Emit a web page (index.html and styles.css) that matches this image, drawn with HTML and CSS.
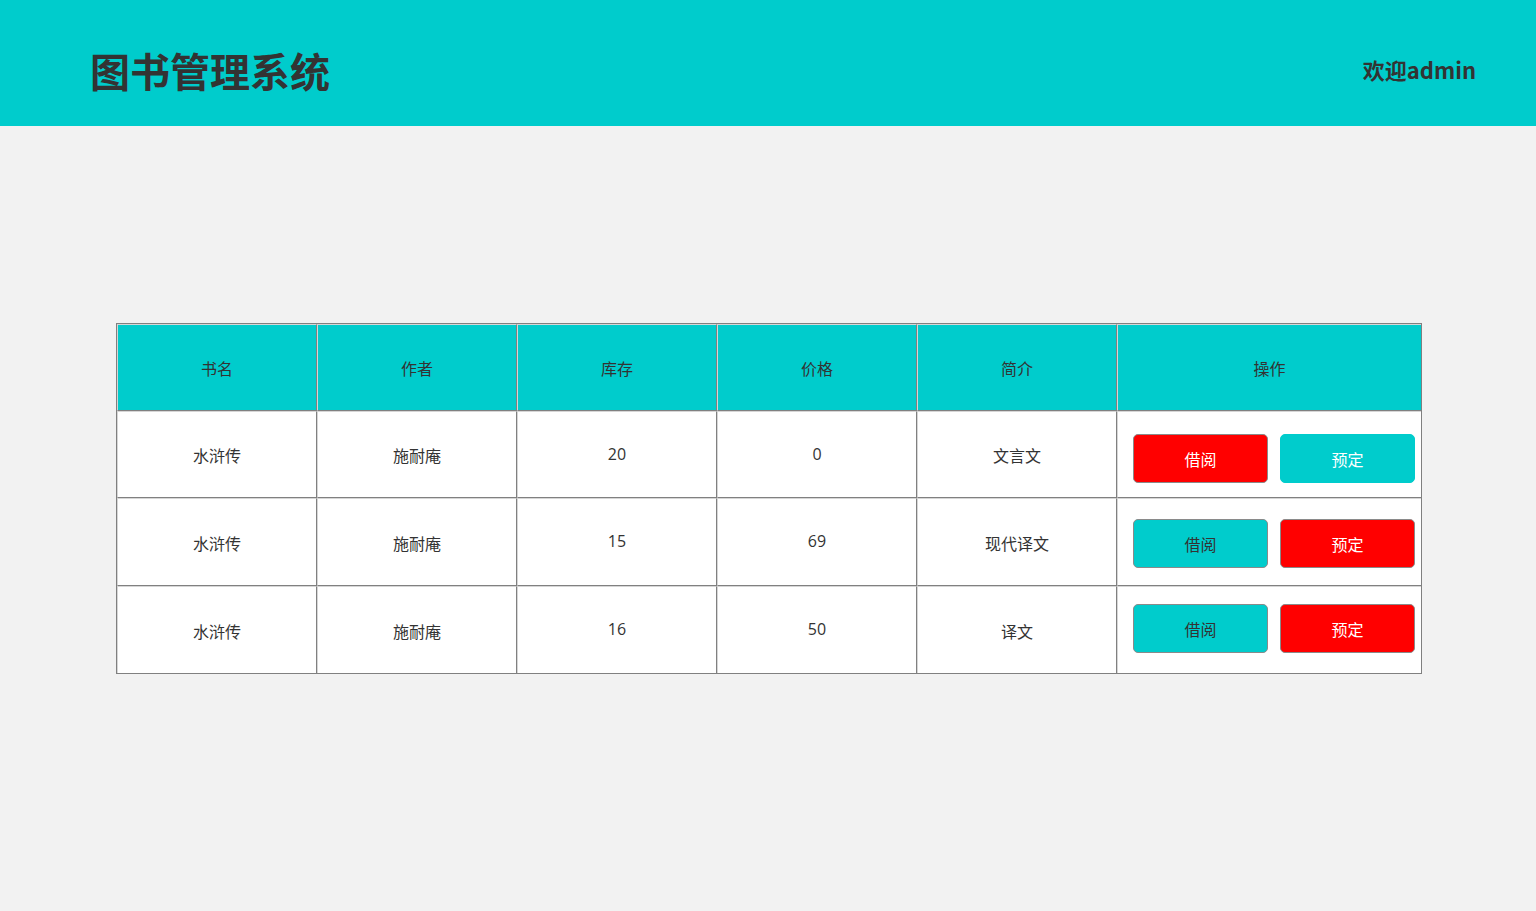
FILE: index.html
```html
<!DOCTYPE html>
<html lang="zh">
<head>
<meta charset="utf-8">
<title>图书管理系统</title>
<link rel="stylesheet" href="styles.css">
</head>
<body>
<header class="topbar">
  <h1 class="title">图书管理系统</h1>
  <div class="welcome">欢迎admin</div>
</header>
<main class="content">
  <table class="books">
    <thead>
      <tr><th>书名</th><th>作者</th><th>库存</th><th>价格</th><th>简介</th><th class="ops">操作</th></tr>
    </thead>
    <tbody>
      <tr><td>水浒传</td><td>施耐庵</td><td class="num">20</td><td class="num">0</td><td>文言文</td>
        <td class="ops"><div class="btns"><button class="btn red">借阅</button><button class="btn cyan light">预定</button></div></td></tr>
      <tr><td>水浒传</td><td>施耐庵</td><td class="num">15</td><td class="num">69</td><td>现代译文</td>
        <td class="ops"><div class="btns"><button class="btn cyan">借阅</button><button class="btn red">预定</button></div></td></tr>
      <tr><td>水浒传</td><td>施耐庵</td><td class="num">16</td><td class="num">50</td><td>译文</td>
        <td class="ops"><div class="btns"><button class="btn cyan">借阅</button><button class="btn red">预定</button></div></td></tr>
    </tbody>
  </table>
</main>
</body>
</html>
```

FILE: styles.css
```css
html, body {
  margin: 0;
  padding: 0;
  background: #f2f2f2;
  font-family: "Noto Sans CJK SC", "Noto Sans", sans-serif;
  color: #333;
}
.topbar {
  height: 126px;
  background: #00cccc;
  display: flex;
  align-items: center;
  justify-content: space-between;
  padding: 0 60px 0 90px;
}
.title {
  margin: 0;
  font-size: 40px;
  font-weight: 700;
  color: #333;
  line-height: 1;
  padding-top: 14px;
}
.welcome {
  font-size: 22px;
  font-weight: 700;
  color: #333;
  margin-top: 12px;
}
.content {
  padding: 197px 0 0 116px;
  display: flex;
}
.books {
  border-collapse: separate;
  border-spacing: 0;
  border: 1px solid #808080;
  background: #fff;
  table-layout: fixed;
  width: 1306px;
}
.books th, .books td {
  width: 200px;
  box-sizing: border-box;
  border-right: 1px solid #808080;
  border-bottom: 1px solid #808080;
  border-left: 1px solid #d6d6d6;
  border-top: 1px solid #d6d6d6;
  text-align: center;
  font-size: 16px;
  font-weight: 400;
  color: #333;
  padding: 0;
}
.books tr > :last-child { border-right: 0; }
.books tbody tr:last-child td { border-bottom: 0; }
.books th {
  background: #00cccc;
  height: 87px;
  padding-top: 0;
}
.books td {
  height: 87px;
  padding-top: 1px;
}
.books tbody tr:nth-child(2) td { height: 88px; }
.books td.num {
  font-family: "Open Sans", "Noto Sans", sans-serif;
  padding-top: 0;
  padding-bottom: 2px;
}
.books .ops { width: 304px; }
.books tr:nth-child(1) td.ops { padding-top: 8px; }
.books tr:nth-child(2) td.ops { padding-top: 3px; }
.books tr:nth-child(3) td.ops { padding-top: 0; padding-bottom: 3px; }
.btns {
  display: flex;
  justify-content: flex-end;
  gap: 12px;
  padding-right: 6px;
}
.btn {
  width: 135px;
  height: 49px;
  border: 1px solid #8a8a8a;
  border-radius: 5px;
  font-family: "Noto Sans CJK SC", sans-serif;
  font-size: 16px;
  padding: 0;
  cursor: pointer;
}
.btn.red {
  background: #ff0000;
  color: #fff;
}
.btn.cyan {
  background: #00cccc;
  color: #333;
}
.btn.cyan.light {
  color: #fff;
  border-color: #00cccc;
}
```
